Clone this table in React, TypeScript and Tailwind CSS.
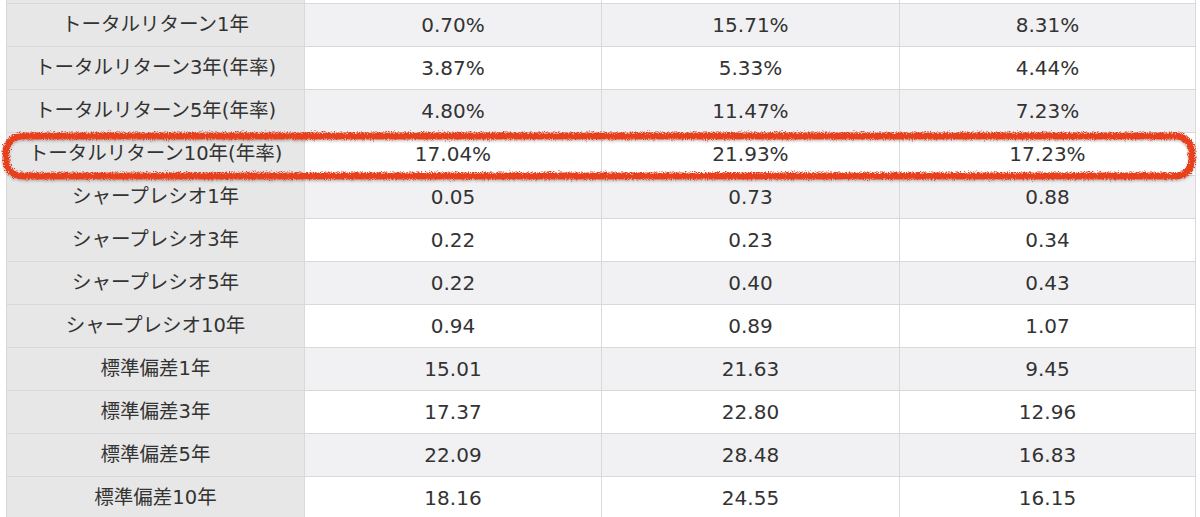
import React from "react";

const rows: [string, string, string, string][] = [
  ["トータルリターン1年", "0.70%", "15.71%", "8.31%"],
  ["トータルリターン3年(年率)", "3.87%", "5.33%", "4.44%"],
  ["トータルリターン5年(年率)", "4.80%", "11.47%", "7.23%"],
  ["トータルリターン10年(年率)", "17.04%", "21.93%", "17.23%"],
  ["シャープレシオ1年", "0.05", "0.73", "0.88"],
  ["シャープレシオ3年", "0.22", "0.23", "0.34"],
  ["シャープレシオ5年", "0.22", "0.40", "0.43"],
  ["シャープレシオ10年", "0.94", "0.89", "1.07"],
  ["標準偏差1年", "15.01", "21.63", "9.45"],
  ["標準偏差3年", "17.37", "22.80", "12.96"],
  ["標準偏差5年", "22.09", "28.48", "16.83"],
  ["標準偏差10年", "18.16", "24.55", "16.15"],
];

export default function App() {
  return (
    <div
      className="relative w-[1200px] h-[517px] overflow-hidden bg-white text-[#333]"
      style={{ fontFamily: '"DejaVu Sans", "Noto Sans CJK JP", sans-serif' }}
    >
      <div className="ml-[6px] w-[1190px] border-l border-[#d9d9d9] flex flex-col">
        {/* partially scrolled-off top row */}
        <div className="flex h-[4px] border-b border-[#d9d9d9]">
          <div className="w-[298px] bg-[#e7e7e7] border-r border-[#d9d9d9]" />
          <div className="w-[297px] bg-white border-r border-[#d9d9d9]" />
          <div className="w-[298px] bg-white border-r border-[#d9d9d9]" />
          <div className="w-[296px] bg-white border-r border-[#d9d9d9]" />
        </div>
        {rows.map((r, i) => {
          const bg = i % 2 === 0 ? "bg-[#f1f1f3]" : "bg-white";
          return (
            <div key={i} className="flex h-[43px] border-b border-[#d9d9d9]">
              <div className="w-[298px] bg-[#e7e7e7] border-r border-[#d9d9d9] flex items-center justify-center text-[19.5px] leading-none">
                {r[0]}
              </div>
              <div className={`w-[297px] ${bg} border-r border-[#d9d9d9] flex items-center justify-center text-[20px] leading-none`}>
                {r[1]}
              </div>
              <div className={`w-[298px] ${bg} border-r border-[#d9d9d9] flex items-center justify-center text-[20px] leading-none`}>
                {r[2]}
              </div>
              <div className={`w-[296px] ${bg} border-r border-[#d9d9d9] flex items-center justify-center text-[20px] leading-none`}>
                {r[3]}
              </div>
            </div>
          );
        })}
      </div>

      {/* hand-drawn red highlight */}
      <svg
        className="absolute left-0 top-0 pointer-events-none"
        width="1200"
        height="517"
        viewBox="0 0 1200 517"
      >
        <defs>
          <filter id="rough" x="-5%" y="-50%" width="110%" height="200%">
            <feTurbulence type="fractalNoise" baseFrequency="0.95" numOctaves="2" seed="3" result="noise" />
            <feDisplacementMap in="SourceGraphic" in2="noise" scale="6" xChannelSelector="R" yChannelSelector="G" result="disp" />
            <feDropShadow dx="0" dy="1.5" stdDeviation="1.2" floodColor="#000" floodOpacity="0.25" />
          </filter>
        </defs>
        <rect
          x="6"
          y="136"
          width="1186"
          height="40"
          rx="16"
          ry="16"
          fill="none"
          stroke="#e8411f"
          strokeWidth="7"
          filter="url(#rough)"
        />
      </svg>
    </div>
  );
}
